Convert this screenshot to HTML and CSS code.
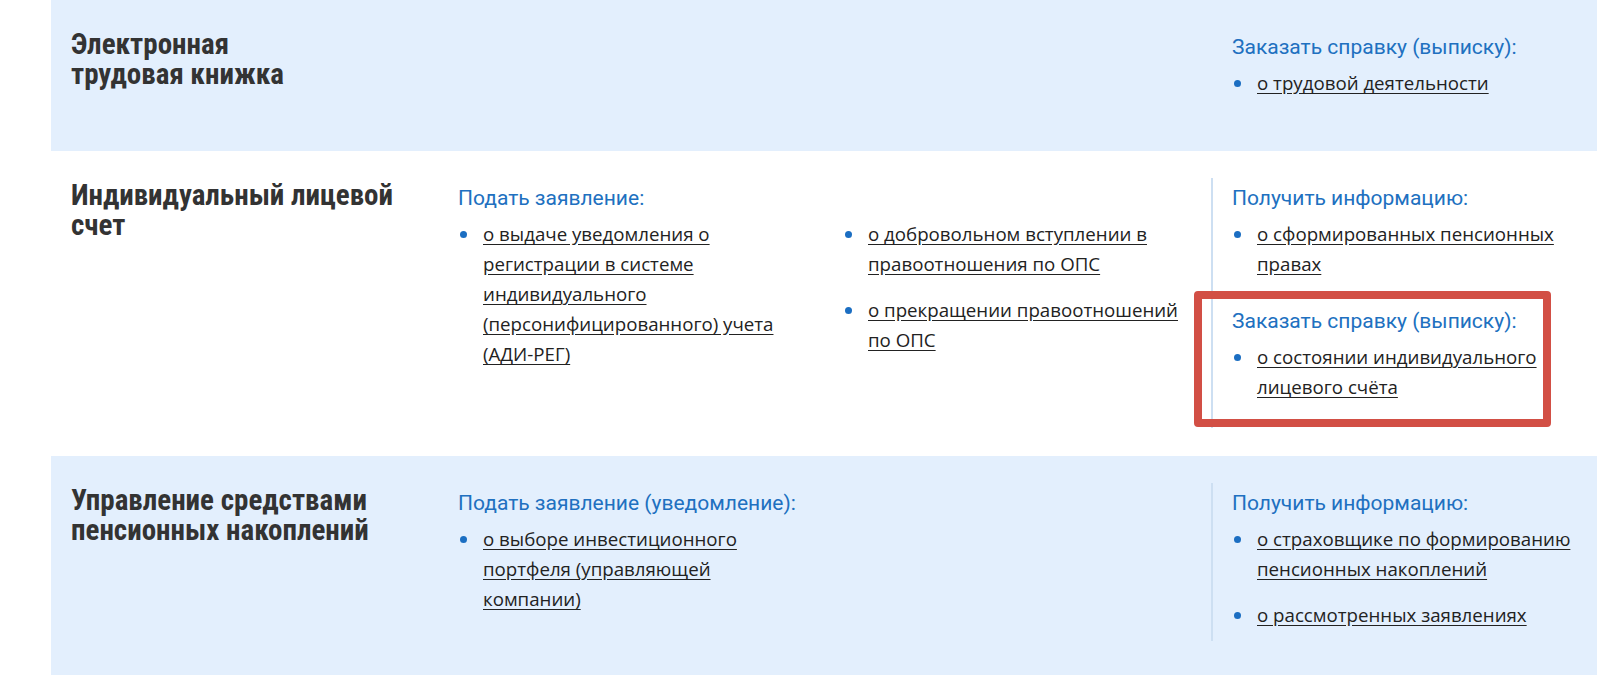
FILE: index.html
```html
<!doctype html>
<html lang="ru">
<head>
	<meta charset="utf-8">
	<title>Электронные услуги</title>
	<link rel="stylesheet" href="styles.css">
</head>
<body>

	<main class="services">

		<!-- ЭТК -->
		<section class="row row_blue row_first">
			<h2 class="row_title">Электронная<br>трудовая книжка</h2>
			<div class="col"></div>
			<div class="col"></div>
			<div class="col col_side no_line">
				<div class="group">
					<h3 class="group_title">Заказать справку (выписку):</h3>
					<ul class="links">
						<li><a href="#">о трудовой деятельности</a></li>
					</ul>
				</div>
			</div>
		</section>

		<!-- ИЛС -->
		<section class="row">
			<h2 class="row_title">Индивидуальный лицевой<br>счет</h2>
			<div class="col col_wide">
				<h3 class="group_title">Подать заявление:</h3>
				<ul class="links">
					<li><a href="#">о выдаче уведомления о регистрации в системе индивидуального (персонифицированного) учета (АДИ-РЕГ)</a></li>
				</ul>
			</div>
			<div class="col col_narrow">
				<ul class="links links_top">
					<li><a href="#">о добровольном вступлении в правоотношения по ОПС</a></li>
					<li><a href="#">о прекращении правоотношений по ОПС</a></li>
				</ul>
			</div>
			<div class="col col_side">
				<div class="group">
					<h3 class="group_title">Получить информацию:</h3>
					<ul class="links">
						<li><a href="#">о сформированных пенсионных правах</a></li>
					</ul>
				</div>
				<div class="group group_next marked">
					<h3 class="group_title">Заказать справку (выписку):</h3>
					<ul class="links">
						<li><a href="#">о состоянии индивидуального лицевого счёта</a></li>
					</ul>
				</div>
			</div>
		</section>

		<!-- Накопления -->
		<section class="row row_blue row_last">
			<h2 class="row_title">Управление средствами<br>пенсионных накоплений</h2>
			<div class="col col_wide">
				<h3 class="group_title">Подать заявление (уведомление):</h3>
				<ul class="links">
					<li><a href="#">о выборе инвестиционного портфеля (управляющей компании)</a></li>
				</ul>
			</div>
			<div class="col"></div>
			<div class="col col_side">
				<div class="group">
					<h3 class="group_title">Получить информацию:</h3>
					<ul class="links">
						<li><a href="#">о страховщике по формированию пенсионных накоплений</a></li>
						<li><a href="#">о рассмотренных заявлениях</a></li>
					</ul>
				</div>
			</div>
		</section>

	</main>

</body>
</html>
```

FILE: styles.css
```css
html, body{
	margin: 0;
	padding: 0;
	overflow: hidden;
	background: #fff;
}

.services{
	padding: 0 3px 0 51px;
	font-family: "Open Sans", "Noto Sans", sans-serif;
	color: #222;
}

.row{
	display: grid;
	grid-template-columns: 387px 385px 368px 1fr;
	align-items: start;
	padding: 27px 20px 28px 20px;
	box-sizing: border-box;
}
.row_blue{
	background-color: #e3effd;
}
.row_first{
	min-height: 151px;
}
.row_last{
	min-height: 240px;
}

.row_title{
	margin: 2px 0 0 0;
	font-family: "Roboto Condensed", "Liberation Sans Narrow", "Roboto", sans-serif;
	font-weight: 700;
	font-size: 29px;
	line-height: 30px;
	color: #333;
}

.col_wide{
	padding-right: 58px;
	padding-top: 6px;
}
.col_narrow{
	padding-right: 21px;
}

.col_side{
	border-left: 2px solid #cddff2;
	padding: 6px 0 11px 19px;
}
.col_side.no_line{
	border-left-color: transparent;
}

.group_title{
	margin: 0 0 7px 0;
	font-family: "Roboto", sans-serif;
	font-weight: 400;
	font-size: 21px;
	line-height: 28px;
	color: #2070c0;
	white-space: nowrap;
}

.group_next{
	margin-top: 28px;
}

.links{
	list-style: none;
	margin: 0;
	padding: 0;
}
.links_top{
	margin-top: 41px;
}
.links li{
	display: flex;
	font-size: 18.7px;
	line-height: 30px;
}
.links li + li{
	margin-top: 16px;
}
.links li::before{
	content: "";
	flex: none;
	width: 7px;
	height: 7px;
	margin: 12px 16px 0 2px;
	border-radius: 50%;
	background-color: #1b6ec2;
}
.links a{
	color: #222;
	text-decoration: underline;
	text-underline-offset: 3px;
}

/* красная рамка-выделение */
.marked{
	position: relative;
	margin-bottom: 15px;
}
.marked::after{
	content: "";
	position: absolute;
	left: -38px;
	top: -16px;
	width: 357px;
	height: 136px;
	box-sizing: border-box;
	border: 8px solid #d24f45;
	border-radius: 4px;
	pointer-events: none;
}
```
